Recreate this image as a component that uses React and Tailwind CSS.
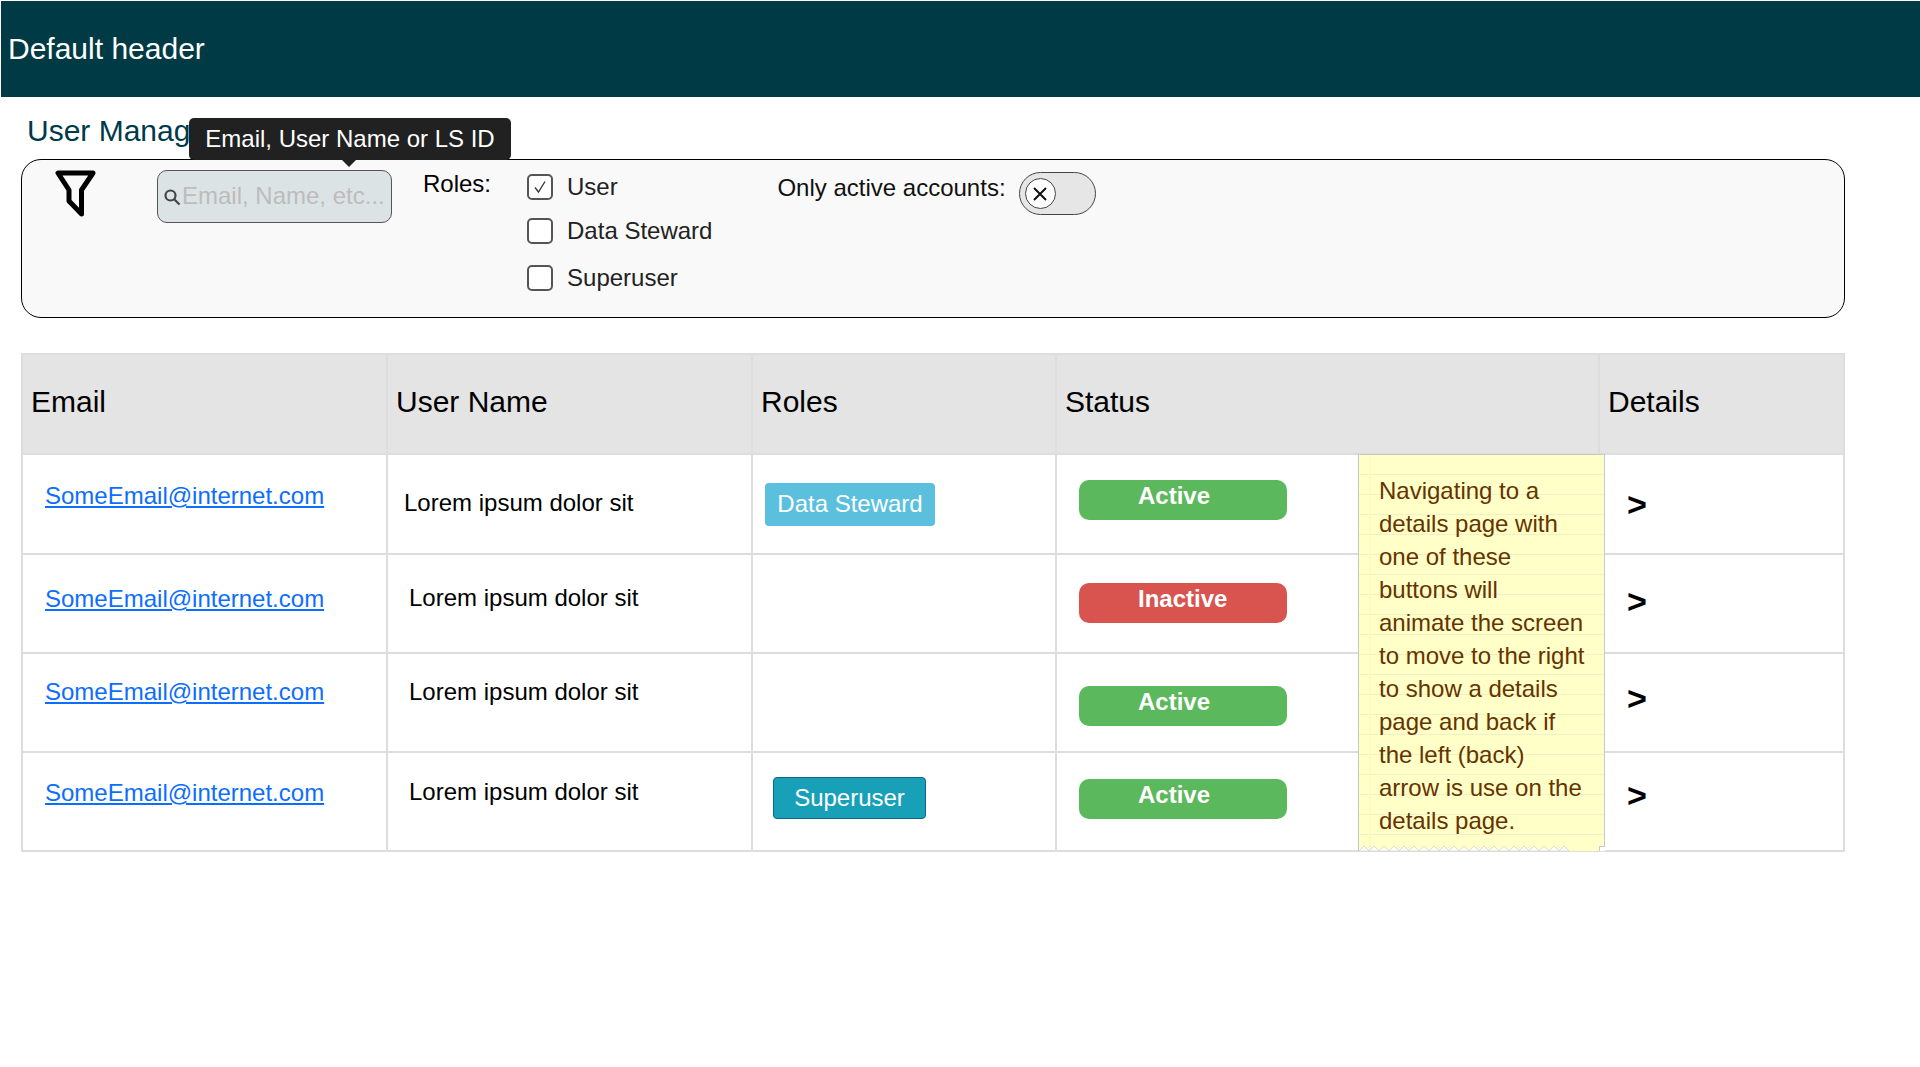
import React from "react";

const rows = [
  { height: "h-[100px]", emailPad: "pt-[26px]", namePad: "pt-[33px] pl-[16px]", statusPad: "pt-[25px]", arrowPad: "pt-[31px]", role: "steward", status: "Active" },
  { height: "h-[99px]", emailPad: "pt-[29px]", namePad: "pt-[28px] pl-[21px]", statusPad: "pt-[28px]", arrowPad: "pt-[28px]", status: "Inactive" },
  { height: "h-[99px]", emailPad: "pt-[23px]", namePad: "pt-[23px] pl-[21px]", statusPad: "pt-[32px]", arrowPad: "pt-[26px]", status: "Active" },
  { height: "h-[99px]", emailPad: "pt-[25px]", namePad: "pt-[24px] pl-[21px]", statusPad: "pt-[26px]", arrowPad: "pt-[24px]", role: "superuser", status: "Active" },
];

const headers = ["Email", "User Name", "Roles", "Status", "Details"];

function Checkbox({ label, checked, rowClass }) {
  return (
    <div className={`flex items-center ${rowClass}`}>
      <span className="w-[26px] h-[26px] rounded-[5px] border-2 border-[#555] bg-white flex items-center justify-center">
        {checked && (
          <svg width="16" height="16" viewBox="0 0 16 16" fill="none" stroke="#333" strokeWidth="1.3">
            <path d="M3 8.5l3.5 4.5L13 2.5" />
          </svg>
        )}
      </span>
      <span className="ml-[14px] text-[24px] leading-[28px] text-[#222]">{label}</span>
    </div>
  );
}

function StatusBadge({ status }) {
  const color = status === "Active" ? "bg-[#5cb85c]" : "bg-[#d9534f]";
  return (
    <div className={`${color} ml-[22px] w-[208px] h-[40px] rounded-[10px] pl-[59px] pt-[1px] text-white font-bold text-[24px] leading-[30px]`}>
      {status}
    </div>
  );
}

export default function App() {
  return (
    <div className="min-h-[1067px] bg-white font-['Liberation_Sans',Arial,sans-serif] text-black">
      <header className="mt-px ml-px h-[96px] bg-[#003a44] flex items-center pl-[7px] pb-[2px] text-[30px] text-white">
        Default header
      </header>

      <h1 className="pl-[27px] pt-[16px] text-[30px] leading-[35px] text-[#003a4a]">User Management</h1>

      <section className="mt-[11px] ml-[21px] w-[1824px] h-[159px] rounded-[20px] border border-black bg-[#f9f9f9] flex">
        {/* filter icon */}
        <svg className="ml-[33px] mt-[10px]" width="41" height="47" viewBox="0 0 41 47" fill="none" stroke="#000" strokeWidth="5" strokeLinejoin="round">
          <path d="M3 3h35L26.500 20v24L14 31V20z" />
        </svg>

        <div className="relative ml-[61px] mt-[10px] w-[235px] h-[53px] rounded-[10px] border border-[#555] bg-[#dce3e5] flex items-center pl-[5px]">
          <svg width="18" height="18" viewBox="0 0 18 18" fill="none" stroke="#444" strokeWidth="2.2">
            <circle cx="7.500" cy="7.500" r="5" />
            <path d="M11 11l5.500 5.500" />
          </svg>
          <span className="ml-px pb-[2px] text-[24px] text-[#bcbcbc] whitespace-nowrap">Email, Name, etc...</span>
          <div className="absolute left-[31px] top-[-53px] w-[322px] h-[42px] rounded-[5px] bg-[#212121] text-white text-[24px] leading-[42px] text-center whitespace-nowrap">
            Email, User Name or LS ID
            <span className="absolute left-[153px] top-[42px] w-0 h-0 border-x-[7px] border-x-transparent border-t-[7px] border-t-[#212121]" />
          </div>
        </div>

        <div className="ml-[31px] mt-[10px] text-[24px] leading-[28px]">Roles:</div>

        <div className="ml-[36px] mt-[13px]">
          <Checkbox label="User" checked />
          <Checkbox label="Data Steward" rowClass="mt-[16px]" />
          <Checkbox label="Superuser" rowClass="mt-[19px]" />
        </div>

        <div className="ml-[65px] mt-[14px] text-[24px] leading-[28px] text-[#111] whitespace-nowrap">Only active accounts:</div>

        <div className="ml-[13px] mt-[12px] w-[77px] h-[43px] rounded-full border border-[#444] bg-[#e6e6e6] pl-[5px] pt-[5px]">
          <div className="w-[31px] h-[31px] rounded-full border border-[#444] bg-white flex items-center justify-center">
            <svg width="18" height="18" viewBox="0 0 18 18" fill="none" stroke="#111" strokeWidth="2">
              <path d="M3 3l12 12M15 3L3 15" />
            </svg>
          </div>
        </div>
      </section>

      <div className="relative mt-[35px] ml-[21px] w-[1824px]">
        <table className="w-full table-fixed border-collapse border-2 border-[#ddd]">
          <colgroup>
            <col className="w-[365px]" />
            <col className="w-[365px]" />
            <col className="w-[304px]" />
            <col className="w-[543px]" />
            <col />
          </colgroup>
          <thead>
            <tr className="h-[100px] bg-[#e4e4e4]">
              {headers.map((h) => (
                <th key={h} className="border-2 border-[#ddd] pl-[8px] pb-[6px] text-left font-normal text-[30px]">
                  {h}
                </th>
              ))}
            </tr>
          </thead>
          <tbody>
            {rows.map((r, i) => (
              <tr key={i} className={`${r.height} align-top`}>
                <td className={`border-2 border-[#ddd] pl-[22px] ${r.emailPad}`}>
                  <a href="#" className="text-[24px] leading-[30px] text-[#0d6efd] underline">SomeEmail@internet.com</a>
                </td>
                <td className={`border-2 border-[#ddd] text-[24px] leading-[30px] ${r.namePad}`}>Lorem ipsum dolor sit</td>
                <td className="border-2 border-[#ddd] p-0">
                  {r.role === "steward" && (
                    <div className="mt-[28px] ml-[12px] w-[170px] h-[43px] rounded-[4px] bg-[#5bc0de] text-white text-[24px] leading-[42px] text-center">
                      Data Steward
                    </div>
                  )}
                  {r.role === "superuser" && (
                    <div className="mt-[24px] ml-[20px] w-[153px] h-[42px] rounded-[4px] border border-[#0a6a85] bg-[#17a0b8] text-white text-[24px] leading-[40px] text-center">
                      Superuser
                    </div>
                  )}
                </td>
                <td className={`border-2 border-[#ddd] p-0 ${r.statusPad}`}>
                  <StatusBadge status={r.status} />
                </td>
                <td className={`border-2 border-[#ddd] pl-[27px] ${r.arrowPad} text-[34px] leading-[36px] font-bold`}>&gt;</td>
              </tr>
            ))}
          </tbody>
        </table>

        {/* sticky note laid over the table */}
        <aside className="absolute left-[1337px] top-[101px] w-[247px] h-[397px] border border-b-0 border-[#c8c8c8] bg-[#ffffc8] bg-[repeating-linear-gradient(to_bottom,transparent_0,transparent_19px,#f2efc4_19px,#f2efc4_20px)] pt-[19px] pl-[20px] text-[24px] leading-[33px] text-[#663300]">
          <span className="absolute left-[10px] top-0 bottom-0 w-[2px] bg-[#fdf9c0]" />
          <p className="relative">
            Navigating to a<br />details page with<br />one of these<br />buttons will<br />animate the screen<br />to move to the right<br />to show a details<br />page and back if<br />the left (back)<br />arrow is use on the<br />details page.
          </p>
          <svg className="absolute left-0 bottom-0" width="240" height="5" viewBox="0 0 240 5">
            <path d="M0 5L5 0l5 5 5-5 5 5 5-5 5 5 5-5 5 5 5-5 5 5 5-5 5 5 5-5 5 5 5-5 5 5 5-5 5 5 5-5 5 5 5-5 5 5 5-5 5 5 5-5 5 5 5-5 5 5 5-5 5 5 5-5 5 5 5-5 5 5 5-5 5 5 5-5 5 5 5-5 5 5 5-5 5 5z" fill="#fff" stroke="#ccc" strokeWidth="0.7" />
          </svg>
          <span className="absolute right-[-1px] bottom-0 w-[6px] h-[5px] border-t border-l border-[#c8c8c8] bg-white" />
        </aside>
      </div>
    </div>
  );
}
